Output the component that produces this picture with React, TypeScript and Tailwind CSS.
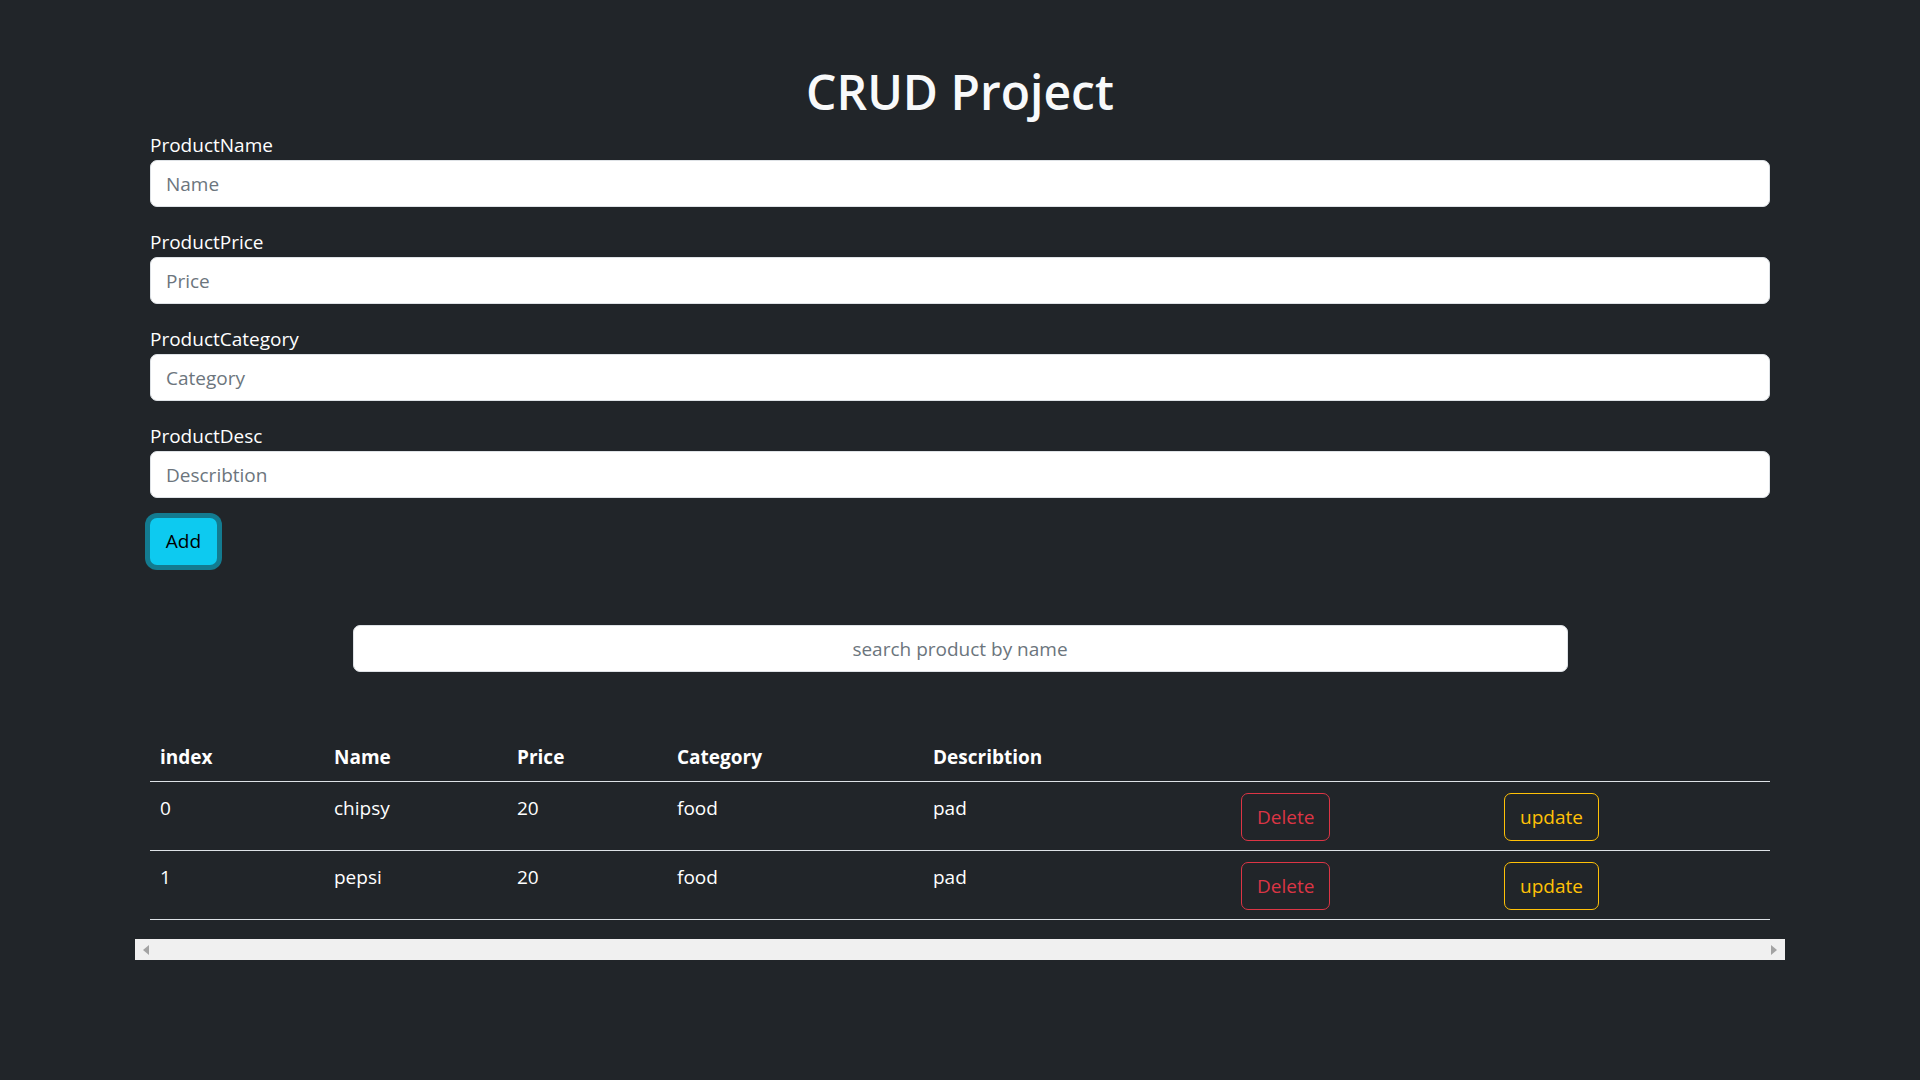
import React from "react";

const rows = [
  { index: 0, name: "chipsy", price: "20", category: "food", desc: "pad" },
  { index: 1, name: "pepsi", price: "20", category: "food", desc: "pad" },
];

const fields = [
  { label: "ProductName", placeholder: "Name" },
  { label: "ProductPrice", placeholder: "Price" },
  { label: "ProductCategory", placeholder: "Category" },
  { label: "ProductDesc", placeholder: "Describtion" },
];

export default function App() {
  return (
    <div
      className="min-h-[1080px] w-full bg-[#212529] text-white"
      style={{ fontFamily: '"Open Sans", "Noto Sans", sans-serif' }}
    >
      <div className="mx-auto w-[1650px] px-[15px] pt-[62px]">
        <h1 className="mb-[8px] text-center text-[48px] font-semibold leading-[60px] text-[#f8f9fa]">
          CRUD Project
        </h1>
        {fields.map((f) => (
          <div key={f.label} className="mb-[20px]">
            <label className="block text-[19px] leading-[30px] text-white">{f.label}</label>
            <input
              placeholder={f.placeholder}
              className="block h-[47px] w-full rounded-[7px] border border-[#dee2e6] bg-white px-[15px] text-[19px] text-[#212529] outline-none placeholder:text-[#6c757d]"
            />
          </div>
        ))}
        <div className="flex">
          <button className="h-[47px] w-[67px] rounded-[7px] bg-[#0dcaf0] text-[19px] text-black shadow-[0_0_0_5px_#137b90]">
            Add
          </button>
        </div>
        <div className="mt-[60px] flex justify-center">
          <input
            placeholder="search product by name"
            className="block h-[47px] w-[1215px] rounded-[7px] border border-[#dee2e6] bg-white px-[15px] text-center text-[19px] text-[#212529] outline-none placeholder:text-[#6c757d]"
          />
        </div>
        <table className="mt-[59px] w-full table-fixed border-collapse text-[19px]">
          <thead>
            <tr className="border-b border-[#dee2e6]">
              <th className="w-[174px] px-[10px] pt-[11px] pb-[9px] text-left font-bold leading-[30px]">index</th>
              <th className="w-[183px] px-[10px] pt-[11px] pb-[9px] text-left font-bold leading-[30px]">Name</th>
              <th className="w-[160px] px-[10px] pt-[11px] pb-[9px] text-left font-bold leading-[30px]">Price</th>
              <th className="w-[256px] px-[10px] pt-[11px] pb-[9px] text-left font-bold leading-[30px]">Category</th>
              <th className="w-[308px] px-[10px] pt-[11px] pb-[9px] text-left font-bold leading-[30px]">Describtion</th>
              <th className="w-[263px] px-[10px] pt-[11px] pb-[9px]"></th>
              <th className="px-[10px] pt-[11px] pb-[9px]"></th>
            </tr>
          </thead>
          <tbody>
            {rows.map((r) => (
              <tr key={r.index} className="border-b border-[#dee2e6] align-top">
                <td className="px-[10px] pt-[11px] pb-[9px] leading-[30px]">{r.index}</td>
                <td className="px-[10px] pt-[11px] pb-[9px] leading-[30px]">{r.name}</td>
                <td className="px-[10px] pt-[11px] pb-[9px] leading-[30px]">{r.price}</td>
                <td className="px-[10px] pt-[11px] pb-[9px] leading-[30px]">{r.category}</td>
                <td className="px-[10px] pt-[11px] pb-[9px] leading-[30px]">{r.desc}</td>
                <td className="px-[10px] pt-[11px] pb-[9px]">
                  <button className="h-[48px] rounded-[7px] border border-[#dc3545] px-[15px] text-[19px] text-[#dc3545]">
                    Delete
                  </button>
                </td>
                <td className="px-[10px] pt-[11px] pb-[9px]">
                  <button className="h-[48px] rounded-[7px] border border-[#ffc107] px-[15px] text-[19px] text-[#ffc107]">
                    update
                  </button>
                </td>
              </tr>
            ))}
          </tbody>
        </table>
      </div>
      <div className="mx-auto mt-[19px] flex h-[21px] w-[1650px] items-center justify-between bg-[#f0f0f0] px-[8px]">
        <svg width="6" height="10" viewBox="0 0 6 10">
          <polygon points="6,0 6,10 0,5" fill="#a3a3a3" />
        </svg>
        <svg width="6" height="10" viewBox="0 0 6 10">
          <polygon points="0,0 0,10 6,5" fill="#a3a3a3" />
        </svg>
      </div>
    </div>
  );
}
